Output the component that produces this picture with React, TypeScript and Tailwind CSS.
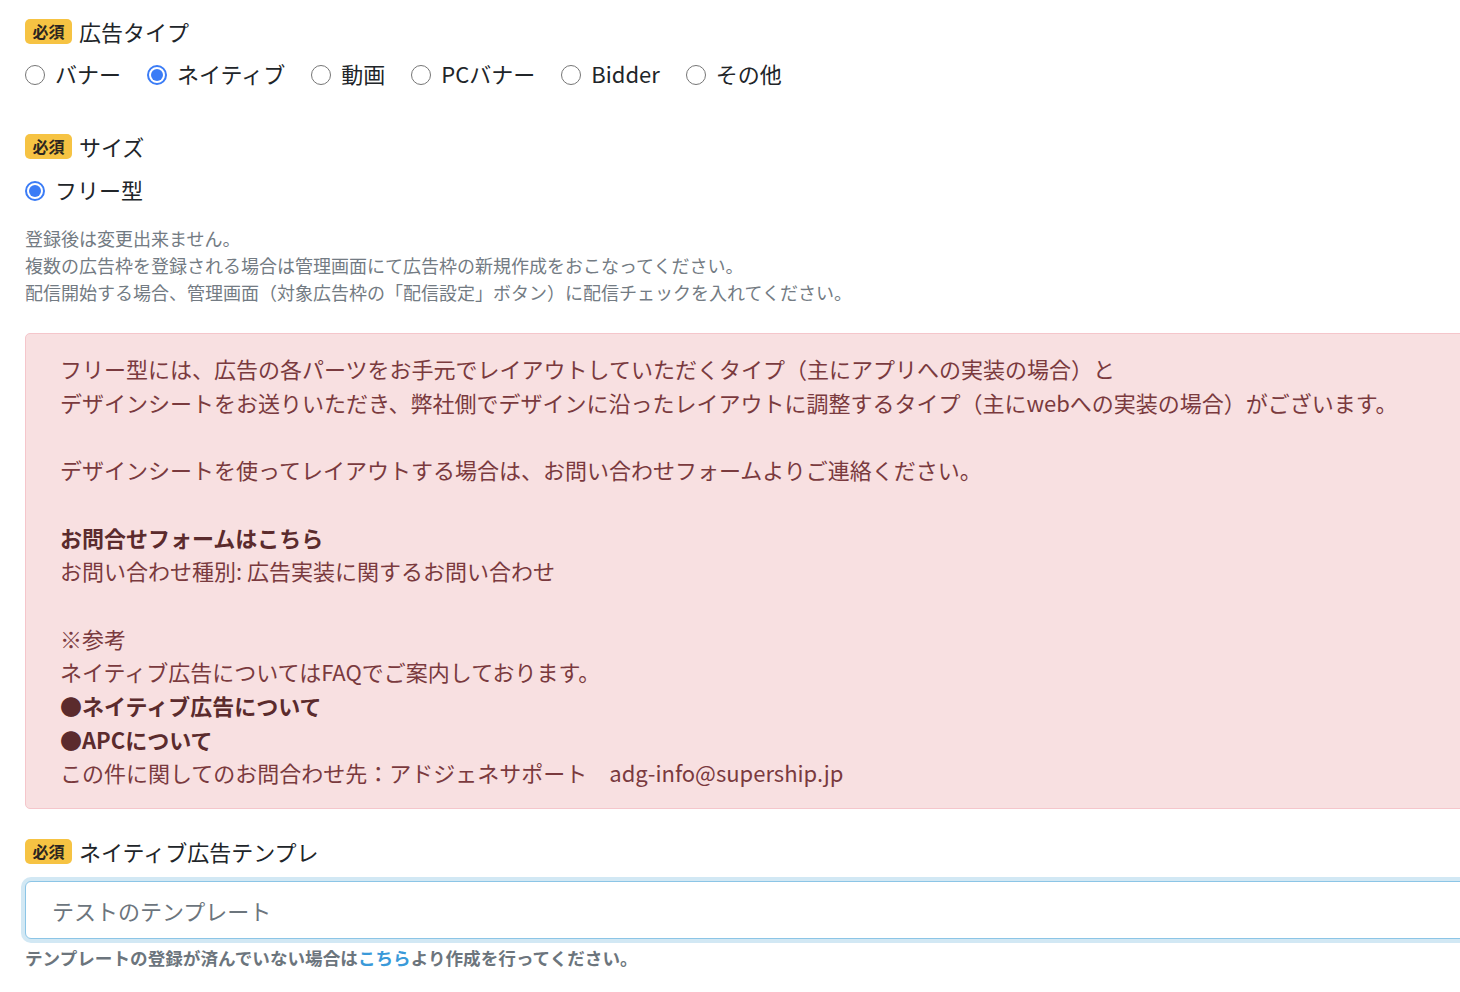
import React from 'react';

const font = { fontFamily: '"Noto Sans CJK JP", "Noto Sans", sans-serif' };

function Badge() {
  return (
    <span className="inline-flex h-[25px] w-[47px] items-center justify-center rounded-[5px] bg-[#f6c343] text-[16px] font-bold leading-none text-[#2b2620]">
      必須
    </span>
  );
}

function FieldLabel({ children }: { children: React.ReactNode }) {
  return (
    <div className="flex h-[26px] items-center gap-[7px]">
      <Badge />
      <span className="text-[22px] leading-none text-[#212529]">{children}</span>
    </div>
  );
}

function Radio({ label, checked = false }: { label: string; checked?: boolean }) {
  return (
    <label className="flex items-center gap-[10px]">
      {checked ? (
        <span className="flex h-[20px] w-[20px] translate-y-[2px] items-center justify-center rounded-full border-[2px] border-[#3b7cf6] bg-white">
          <span className="h-[12px] w-[12px] rounded-full bg-[#3b7cf6]" />
        </span>
      ) : (
        <span className="h-[20px] w-[20px] translate-y-[2px] rounded-full border-[1.5px] border-[#767676] bg-white" />
      )}
      <span className="text-[22px] leading-none text-[#212529]">{label}</span>
    </label>
  );
}

const adTypes = [
  { label: 'バナー' },
  { label: 'ネイティブ', checked: true },
  { label: '動画' },
  { label: 'PCバナー' },
  { label: 'Bidder' },
  { label: 'その他' },
];

export default function App() {
  return (
    <div className="h-[992px] w-[1460px] overflow-hidden bg-white" style={font}>
      <div className="w-[1520px] pl-[25px] pt-[18px]">
        <FieldLabel>広告タイプ</FieldLabel>
        <div className="mt-[18px] flex items-center gap-[26px]">
          {adTypes.map((t) => (
            <Radio key={t.label} label={t.label} checked={t.checked} />
          ))}
        </div>

        <div className="mt-[49px]">
          <FieldLabel>サイズ</FieldLabel>
        </div>
        <div className="mt-[19px]">
          <Radio label="フリー型" checked />
        </div>

        <div className="mt-[25px] text-[18px] leading-[27px] text-[#737b83]">
          <p>登録後は変更出来ません。</p>
          <p>複数の広告枠を登録される場合は管理画面にて広告枠の新規作成をおこなってください。</p>
          <p>配信開始する場合、管理画面（対象広告枠の「配信設定」ボタン）に配信チェックを入れてください。</p>
        </div>

        <div className="mt-[27px] rounded-[5px] border border-[#f5c6cb] bg-[#f8e0e1] px-[34px] py-[18px] text-[22px] leading-[33.7px] text-[#7a3a3e]">
          <p>フリー型には、広告の各パーツをお手元でレイアウトしていただくタイプ（主にアプリへの実装の場合）と</p>
          <p>デザインシートをお送りいただき、弊社側でデザインに沿ったレイアウトに調整するタイプ（主にwebへの実装の場合）がございます。</p>
          <p>&nbsp;</p>
          <p>デザインシートを使ってレイアウトする場合は、お問い合わせフォームよりご連絡ください。</p>
          <p>&nbsp;</p>
          <p className="font-bold text-[#5b2b2d]">お問合せフォームはこちら</p>
          <p>お問い合わせ種別: 広告実装に関するお問い合わせ</p>
          <p>&nbsp;</p>
          <p>※参考</p>
          <p>ネイティブ広告についてはFAQでご案内しております。</p>
          <p className="font-bold text-[#5b2b2d]">●ネイティブ広告について</p>
          <p className="font-bold text-[#5b2b2d]">●APCについて</p>
          <p>この件に関してのお問合わせ先：アドジェネサポート　adg-info@supership.jp</p>
        </div>

        <div className="mt-[29px]">
          <FieldLabel>ネイティブ広告テンプレ</FieldLabel>
        </div>
        <div className="mt-[17px] flex h-[58px] items-center rounded-[6px] border border-[#8cc5e6] bg-white px-[26px] shadow-[0_0_0_4px_#d2e8f4]">
          <span className="text-[22px] leading-none text-[#6c757d]">テストのテンプレート</span>
        </div>
        <p className="mt-[5px] text-[17.6px] font-bold leading-[27px] text-[#6c757d]">
          テンプレートの登録が済んでいない場合は<span className="text-[#3a9ad9]">こちら</span>より作成を行ってください。
        </p>
      </div>
    </div>
  );
}
